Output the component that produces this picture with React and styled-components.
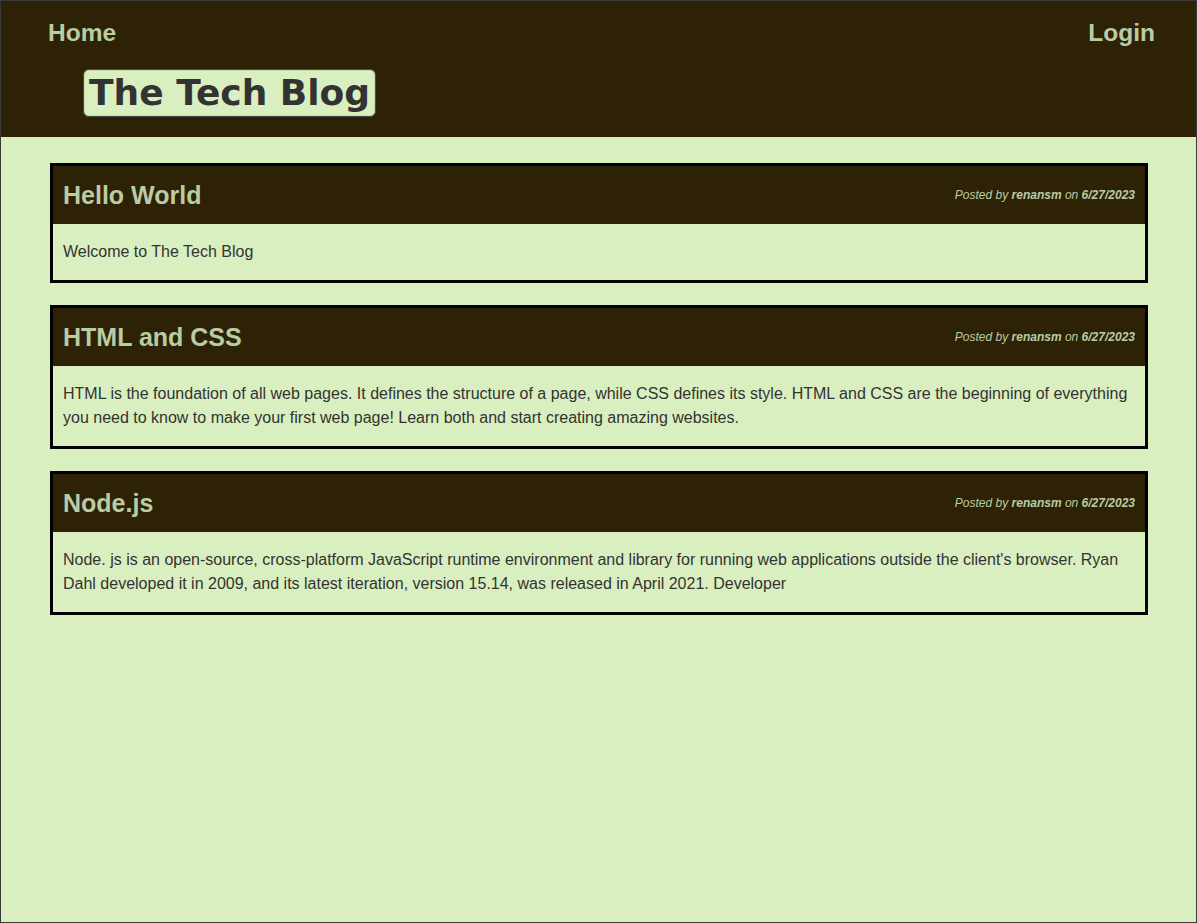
import React from 'react'
import styled, { createGlobalStyle } from 'styled-components'

const GlobalStyle = createGlobalStyle`
  * { box-sizing: border-box; }
  body {
    margin: 0;
    font-family: 'Liberation Sans', Arial, sans-serif;
    background: #d9efbf;
  }
`

const Page = styled.div`
  min-height: 100vh;
  border: 1px solid #3a3a3a;
  background: #d9efbf;
  display: flex;
  flex-direction: column;
`

const Header = styled.header`
  background: #2d2206;
  padding: 18px 41px 20px 47px;
  display: flex;
  flex-direction: column;
`

const Nav = styled.nav`
  display: flex;
  justify-content: space-between;
  align-items: center;
`

const NavLink = styled.a`
  color: #b9cca4;
  font-size: 24.5px;
  font-weight: bold;
  line-height: 28px;
  text-decoration: none;
`

const Brand = styled.h1`
  align-self: flex-start;
  margin: 22px 0 0 35px;
  padding: 0 5px;
  background: #d9efbf;
  color: #333333;
  border: 1px solid #4a4a4a;
  border-radius: 6px;
  box-shadow: inset 0 0 0 1px #c8dcb0;
  font-family: 'DejaVu Sans', Verdana, sans-serif;
  font-size: 36px;
  line-height: 46px;
  font-weight: bold;
`

const Main = styled.main`
  padding: 26px 48px 24px 49px;
  display: flex;
  flex-direction: column;
  gap: 22px;
`

const Card = styled.article`
  border: 3px solid #000;
`

const CardHead = styled.div`
  background: #2d2206;
  display: flex;
  justify-content: space-between;
  align-items: center;
  padding: 15px 10px;
`

const CardTitle = styled.h2`
  margin: 0;
  color: #b9cca4;
  font-size: 25px;
  line-height: 28px;
  font-weight: bold;
`

const Meta = styled.p`
  margin: 0;
  color: #b9cca4;
  font-size: 12px;
  font-style: italic;
  b { font-weight: bold; }
`

const CardBody = styled.div`
  padding: 16px 10px;
  color: #333333;
  font-size: 16px;
  line-height: 24px;
`

const posts = [
  { title: 'Hello World', body: 'Welcome to The Tech Blog' },
  {
    title: 'HTML and CSS',
    body: 'HTML is the foundation of all web pages. It defines the structure of a page, while CSS defines its style. HTML and CSS are the beginning of everything you need to know to make your first web page! Learn both and start creating amazing websites.',
  },
  {
    title: 'Node.js',
    body: "Node. js is an open-source, cross-platform JavaScript runtime environment and library for running web applications outside the client's browser. Ryan Dahl developed it in 2009, and its latest iteration, version 15.14, was released in April 2021. Developer",
  },
]

const App = () => {
  return (
    <>
      <GlobalStyle />
      <Page>
        <Header>
          <Nav>
            <NavLink href="#">Home</NavLink>
            <NavLink href="#">Login</NavLink>
          </Nav>
          <Brand>The Tech Blog</Brand>
        </Header>
        <Main>
          {posts.map(post => (
            <Card key={post.title}>
              <CardHead>
                <CardTitle>{post.title}</CardTitle>
                <Meta>
                  Posted by <b>renansm</b> on <b>6/27/2023</b>
                </Meta>
              </CardHead>
              <CardBody>{post.body}</CardBody>
            </Card>
          ))}
        </Main>
      </Page>
    </>
  )
}

export default App
